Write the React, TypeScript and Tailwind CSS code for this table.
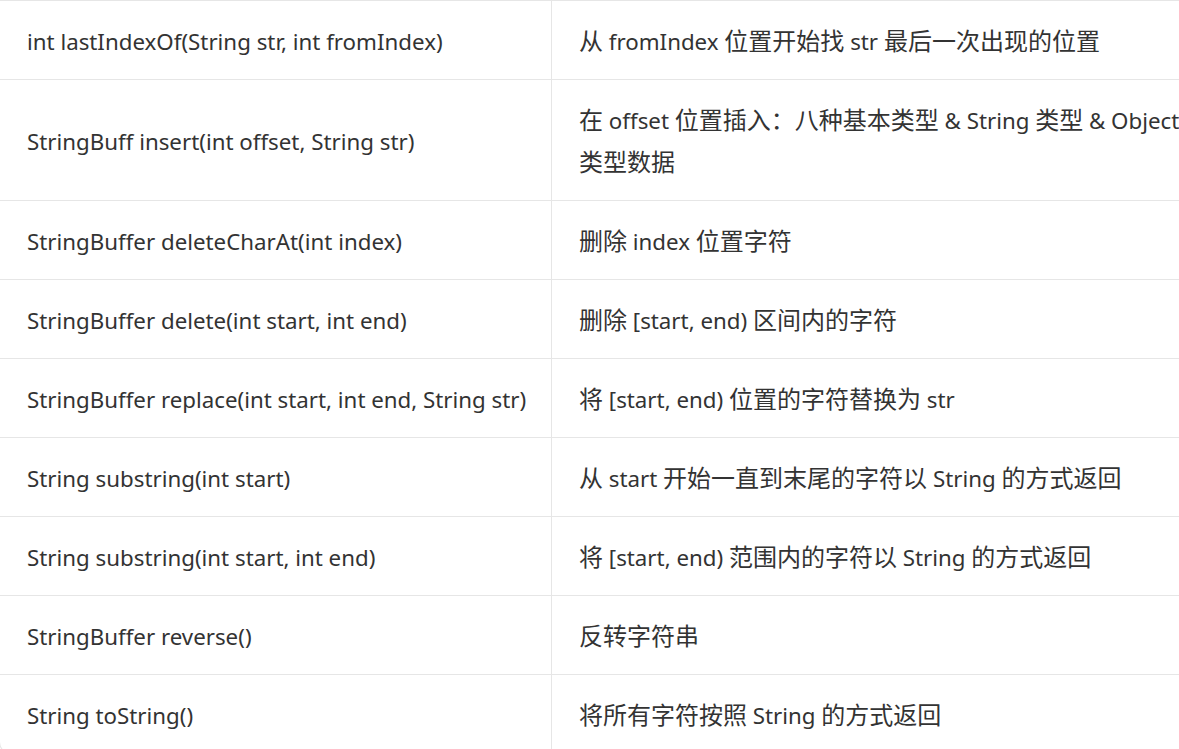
import React from 'react';

const rows: { method: string; desc: string[] }[] = [
    { method: 'int lastIndexOf(String str, int fromIndex)', desc: ['从 fromIndex 位置开始找 str 最后一次出现的位置'] },
    { method: 'StringBuff insert(int offset, String str)', desc: ['在 offset 位置插入：八种基本类型 & String 类型 & Object', '类型数据'] },
    { method: 'StringBuffer deleteCharAt(int index)', desc: ['删除 index 位置字符'] },
    { method: 'StringBuffer delete(int start, int end)', desc: ['删除 [start, end) 区间内的字符'] },
    { method: 'StringBuffer replace(int start, int end, String str)', desc: ['将 [start, end) 位置的字符替换为 str'] },
    { method: 'String substring(int start)', desc: ['从 start 开始一直到末尾的字符以 String 的方式返回'] },
    { method: 'String substring(int start, int end)', desc: ['将 [start, end) 范围内的字符以 String 的方式返回'] },
    { method: 'StringBuffer reverse()', desc: ['反转字符串'] },
    { method: 'String toString()', desc: ['将所有字符按照 String 的方式返回'] },
];

// CJK glyphs render a bit larger than the latin text in the original
const Mixed: React.FC<{ text: string }> = ({ text }) => {
    const parts = text.split(/([\u3000-\u303f\u4e00-\u9fff\uff00-\uffef]+)/);
    return (
        <>
            {parts.map((p, i) =>
                i % 2 === 1 ? (
                    <span key={i} className="text-[24px] leading-none">
                        {p}
                    </span>
                ) : (
                    <span key={i}>{p}</span>
                )
            )}
        </>
    );
};

export default function App() {
    return (
        <div
            className="w-[1179px] h-[749px] overflow-hidden bg-white text-[#333333]"
            style={{ fontFamily: '"Noto Sans", "Noto Sans CJK SC", sans-serif' }}
        >
            {/* table, wider than the window */}
            <div className="w-[1400px] -ml-px border-l border-b border-[#e6e6e6] rounded-bl-xl">
                {rows.map((row, i) => (
                    <div key={i} className="flex border-t border-[#e6e6e6]">
                        <div className="w-[551px] shrink-0 px-[27px] pt-[20px] pb-[16px] text-[22.3px] leading-[42px] flex items-center whitespace-nowrap">
                            {row.method}
                        </div>
                        <div className="flex-1 border-l border-[#e6e6e6] px-[27px] pt-[20px] pb-[16px] text-[22.3px] leading-[42px] whitespace-nowrap">
                            {row.desc.map((line, j) => (
                                <div key={j} className="h-[42px]">
                                    <Mixed text={line} />
                                </div>
                            ))}
                        </div>
                    </div>
                ))}
            </div>
        </div>
    );
}
